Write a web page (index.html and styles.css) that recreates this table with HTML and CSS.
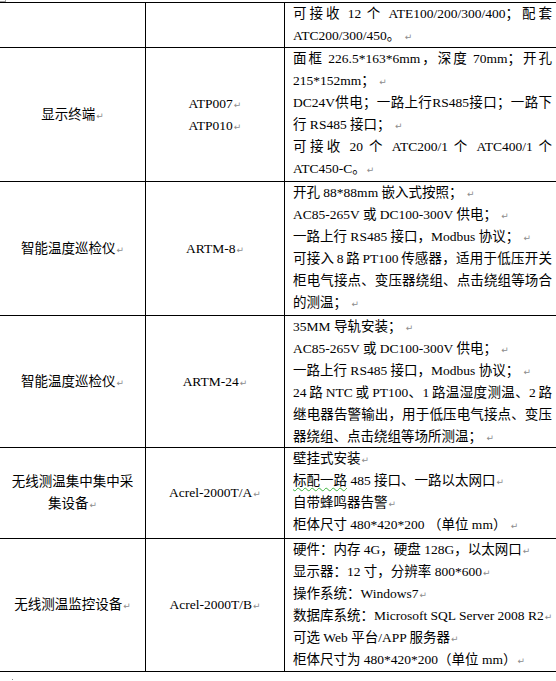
FILE: index.html
```html
<!DOCTYPE html>
<html lang="zh-CN">
<head>
<meta charset="utf-8">
<title>设备清单</title>
<link rel="stylesheet" href="styles.css">
</head>
<body>
<div class="page">
  <div class="corner"></div>
  <div class="tbl">
    <div class="c"></div>
    <div class="c"></div>
    <div class="c txt">
      <div class="ln j">可接收 12 个 ATE100/200/300/400；配套</div>
      <div class="ln">ATC200/300/450。 <span class="pm">↵</span></div>
    </div>

    <div class="c ctr"><div>显示终端<span class="pm">↵</span></div></div>
    <div class="c ctr"><div>ATP007<span class="pm">↵</span></div><div>ATP010<span class="pm">↵</span></div></div>
    <div class="c txt">
      <div class="ln j">面框 226.5*163*6mm，深度 70mm；开孔</div>
      <div class="ln">215*152mm； <span class="pm">↵</span></div>
      <div class="ln j">DC24V供电；一路上行RS485接口；一路下</div>
      <div class="ln">行 RS485 接口； <span class="pm">↵</span></div>
      <div class="ln j">可接收 20 个 ATC200/1 个 ATC400/1 个</div>
      <div class="ln">ATC450-C。<span class="pm">↵</span></div>
    </div>

    <div class="c ctr"><div>智能温度巡检仪<span class="pm">↵</span></div></div>
    <div class="c ctr"><div>ARTM-8<span class="pm">↵</span></div></div>
    <div class="c txt">
      <div class="ln">开孔 88*88mm 嵌入式按照； <span class="pm">↵</span></div>
      <div class="ln">AC85-265V 或 DC100-300V 供电； <span class="pm">↵</span></div>
      <div class="ln">一路上行 RS485 接口，Modbus 协议； <span class="pm">↵</span></div>
      <div class="ln j">可接入 8 路 PT100 传感器，适用于低压开关</div>
      <div class="ln j">柜电气接点、变压器绕组、点击绕组等场合</div>
      <div class="ln">的测温； <span class="pm">↵</span></div>
    </div>

    <div class="c ctr"><div>智能温度巡检仪<span class="pm">↵</span></div></div>
    <div class="c ctr"><div>ARTM-24<span class="pm">↵</span></div></div>
    <div class="c txt">
      <div class="ln">35MM 导轨安装； <span class="pm">↵</span></div>
      <div class="ln">AC85-265V 或 DC100-300V 供电； <span class="pm">↵</span></div>
      <div class="ln">一路上行 RS485 接口，Modbus 协议； <span class="pm">↵</span></div>
      <div class="ln j">24 路 NTC 或 PT100、1 路温湿度测温、2 路</div>
      <div class="ln j">继电器告警输出，用于低压电气接点、变压</div>
      <div class="ln">器绕组、点击绕组等场所测温； <span class="pm">↵</span></div>
    </div>

    <div class="c ctr"><div>无线测温集中集中采</div><div>集设备<span class="pm">↵</span></div></div>
    <div class="c ctr"><div>Acrel-2000T/A<span class="pm">↵</span></div></div>
    <div class="c txt">
      <div class="ln">壁挂式安装<span class="pm">↵</span></div>
      <div class="ln"><span class="gram">标配一路</span> 485 接口、一路以太网口<span class="pm">↵</span></div>
      <div class="ln">自带蜂鸣器告警<span class="pm">↵</span></div>
      <div class="ln">柜体尺寸 480*420*200 （单位 mm） <span class="pm">↵</span></div>
    </div>

    <div class="c ctr"><div>无线测温监控设备<span class="pm">↵</span></div></div>
    <div class="c ctr"><div>Acrel-2000T/B<span class="pm">↵</span></div></div>
    <div class="c txt">
      <div class="ln">硬件：内存 4G，硬盘 128G，以太网口<span class="pm">↵</span></div>
      <div class="ln">显示器：12 寸，分辨率 800*600<span class="pm">↵</span></div>
      <div class="ln">操作系统：Windows7<span class="pm">↵</span></div>
      <div class="ln">数据库系统：Microsoft SQL Server 2008 R2<span class="pm">↵</span></div>
      <div class="ln">可选 Web 平台/APP 服务器<span class="pm">↵</span></div>
      <div class="ln">柜体尺寸为 480*420*200（单位 mm）<span class="pm">↵</span></div>
    </div>
  </div>
  <div class="foot"><div class="dot"></div></div>
</div>
</body>
</html>
```
FILE: styles.css
```css
html, body {
  margin: 0;
  padding: 0;
  background: #fff;
  overflow: hidden;
}
body {
  font-family: "Liberation Serif", "Noto Sans CJK SC", serif;
  font-size: 13.5px;
  color: #000;
}
.page {
  position: relative;
  padding-top: 2px;
}
.corner {
  position: absolute;
  top: 0;
  left: 0;
  width: 5px;
  height: 1px;
  border-right: 1px solid #a0a0a0;
  border-bottom: 1px solid #a0a0a0;
}
.tbl {
  display: grid;
  grid-template-columns: 145px 138px 272px;
  grid-template-rows: 44px 133px 133px 131px 90px 132px;
  gap: 1px;
  background: #000;
  padding: 1px 0;
  width: 557px;
}
.c {
  background: #fff;
  line-height: 22px;
  overflow: hidden;
}
.ctr {
  display: flex;
  flex-direction: column;
  align-items: center;
  justify-content: center;
  text-align: center;
  padding: 0 6px;
  white-space: nowrap;
}
.txt {
  padding: 0 5px 0 8px;
}
.ln {
  white-space: nowrap;
}
.ln.j {
  white-space: normal;
  word-spacing: -1px;
  text-align: justify;
  text-align-last: justify;
}
.pm {
  font-family: "DejaVu Sans", sans-serif;
  font-size: 9px;
  line-height: 1;
  color: #8c8c8c;
  margin-left: 1px;
}
.gram {
  text-decoration: underline wavy #3cb43c;
  text-decoration-thickness: 1px;
  text-underline-offset: 2px;
}
.foot {
  height: 9px;
  padding-left: 12px;
  padding-top: 7px;
  box-sizing: border-box;
}
.dot {
  width: 1px;
  height: 1px;
  background: #888;
}
```
